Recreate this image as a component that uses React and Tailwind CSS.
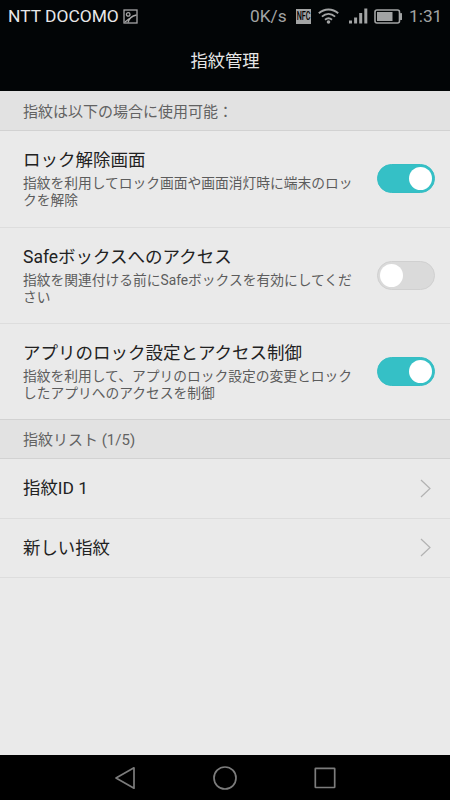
import React, { useState } from "react";
import cn from "clsx";

const defaultSettings = [
  {
    id: "unlock",
    title: "ロック解除画面",
    lines: ["指紋を利用してロック画面や画面消灯時に端末のロッ", "クを解除"],
    enabled: true
  },
  {
    id: "safe",
    title: "Safeボックスへのアクセス",
    lines: ["指紋を関連付ける前にSafeボックスを有効にしてくだ", "さい"],
    enabled: false
  },
  {
    id: "applock",
    title: "アプリのロック設定とアクセス制御",
    lines: [
      "指紋を利用して、アプリのロック設定の変更とロック",
      "したアプリへのアクセスを制御"
    ],
    enabled: true
  }
];

const fingerprints = ["指紋ID 1", "新しい指紋"];

const StatusBar = () => (
  <div className="flex h-8 items-center justify-between pl-2 pr-2">
    <div className="flex items-center text-[#e8e8e8]">
      <span className="w-[111px] whitespace-nowrap text-[17.4px] leading-8">
        NTT DOCOMO
      </span>
      <svg
        className="ml-1 h-[15px] w-[15px]"
        viewBox="0 0 15 15"
        fill="none"
        stroke="#a6a6a6"
        strokeWidth="1.3"
      >
        <rect x="1" y="1" width="13" height="13" />
        <circle cx="5.2" cy="5.4" r="1.8" />
        <path d="M2 13 6.5 9.5M5 13.5C6 9 8.5 7 13.5 6" />
      </svg>
    </div>
    <div className="flex items-center text-[#a2a4a4]">
      <span className="w-[37px] whitespace-nowrap text-[17.3px] leading-8">
        0K/s
      </span>
      <span className="ml-[9px] flex h-[15px] w-[15px] items-center justify-center bg-[#a2a4a4]">
        <span className="scale-x-[0.72] scale-y-[1.3] text-[10px] font-medium leading-none text-black">
          NFC
        </span>
      </span>
      <svg
        className="ml-[7px] h-4 w-[21px]"
        viewBox="0 0 21 16"
        fill="none"
        stroke="#a2a4a4"
        strokeWidth="1.9"
      >
        <path d="M.8 5.2C6.5.2 14.5.2 20.2 5.2M3.9 8.6c4-3.5 9.2-3.5 13.2 0M7 11.8c2.2-1.9 4.8-1.9 7 0" />
        <circle cx="10.5" cy="14" r="1.8" fill="#a2a4a4" stroke="none" />
      </svg>
      <svg
        className="ml-[10px] h-4 w-[19px]"
        viewBox="0 0 19 16"
        fill="#a2a4a4"
      >
        <rect x="0" y="12.5" width="3" height="3" />
        <rect x="5.1" y="9.5" width="3" height="6" />
        <rect x="10.2" y="5" width="3" height="10.5" />
        <rect x="15.3" y="0.5" width="3" height="15" />
      </svg>
      <svg className="ml-[6px] h-[15px] w-[29px]" viewBox="0 0 29 15">
        <rect
          x="1"
          y="1"
          width="24.5"
          height="13"
          rx="2"
          fill="none"
          stroke="#a2a4a4"
          strokeWidth="1.6"
        />
        <rect x="3" y="3" width="15.5" height="9" fill="#a2a4a4" />
        <rect x="26" y="4" width="2" height="7" rx="0.6" fill="#a2a4a4" />
      </svg>
      <span className="ml-[6px] w-[33px] whitespace-nowrap text-[17.3px] leading-8">
        1:31
      </span>
    </div>
  </div>
);

const SectionTitle = ({ className, children }) => (
  <h2
    className={cn(
      "flex items-center border-b border-[#d2d2d2] bg-[#e2e2e2] pl-[23px] pt-[3px] text-[15px] text-[#626262]",
      className
    )}
  >
    {children}
  </h2>
);

const Switch = ({ label, checked, onChange }) => (
  <button
    type="button"
    role="switch"
    aria-label={label}
    aria-checked={checked}
    onClick={onChange}
    className={cn(
      "flex h-[29px] w-[58px] flex-none items-center rounded-full border px-[2px]",
      checked
        ? "justify-end border-[#35bdc3] bg-[#35c0c6]"
        : "justify-start border-[#d0d0d0] bg-[#dadada]"
    )}
  >
    <span className="h-[23px] w-[23px] rounded-full bg-white" />
  </button>
);

const NavBar = () => (
  <nav className="flex h-[45px] flex-none items-center bg-black">
    <svg
      className="h-[45px] w-full"
      viewBox="0 0 450 45"
      fill="none"
      stroke="#7c7c7c"
      strokeWidth="1.7"
      strokeLinejoin="round"
    >
      <path d="M134 12.8v20.4L116 23z" />
      <circle cx="225" cy="23" r="11" />
      <rect x="315.3" y="13.3" width="19.4" height="19.2" rx="0.5" />
    </svg>
  </nav>
);

const App = () => {
  const [settings, setSettings] = useState(defaultSettings);

  const toggle = id => {
    setSettings(
      settings.map(item =>
        item.id === id ? { ...item, enabled: !item.enabled } : item
      )
    );
  };

  return (
    <div className="flex h-[800px] w-[450px] flex-col overflow-hidden bg-[#eaeaea] font-[Roboto,'Noto_Sans_CJK_JP',sans-serif]">
      <header className="h-[91px] flex-none bg-[#020506]">
        <StatusBar />
        <h1 className="flex h-[58px] items-center justify-center pt-px text-[17.3px] text-[#e6e6e6]">
          指紋管理
        </h1>
      </header>
      <main className="flex-1">
        <SectionTitle className="h-10">
          指紋は以下の場合に使用可能：
        </SectionTitle>
        {settings.map((item, index) => (
          <div
            key={item.id}
            className={cn(
              "flex items-center justify-between border-b pl-[23px] pr-[15px]",
              index === 0 ? "h-[97px] pb-px" : "h-24",
              index === settings.length - 1
                ? "border-[#d2d2d2]"
                : "border-[#dddddd]"
            )}
          >
            <div className="whitespace-nowrap pb-px">
              <h3 className="mb-[2px] text-[17.5px] leading-[25px] text-[#222]">
                {item.title}
              </h3>
              <p className="text-[13.75px] leading-[16.5px] text-[#5c5c5c]">
                {item.lines.map(line => (
                  <span className="block" key={line}>
                    {line}
                  </span>
                ))}
              </p>
            </div>
            <Switch
              label={item.title}
              checked={item.enabled}
              onChange={() => toggle(item.id)}
            />
          </div>
        ))}
        <SectionTitle className="h-[39px]">指紋リスト (1/5)</SectionTitle>
        {fingerprints.map(name => (
          <div
            key={name}
            className="flex h-[59.5px] items-center justify-between border-b border-[#dddddd] pl-[23px] pr-[19px] text-[17.4px] text-[#222]"
          >
            {name}
            <svg
              className="h-[19px] w-[11px]"
              viewBox="0 0 11 19"
              fill="none"
              stroke="#b2b2b2"
              strokeWidth="1.2"
            >
              <path d="M1 1l9 8.5L1 18" />
            </svg>
          </div>
        ))}
      </main>
      <NavBar />
    </div>
  );
};

export default App;
